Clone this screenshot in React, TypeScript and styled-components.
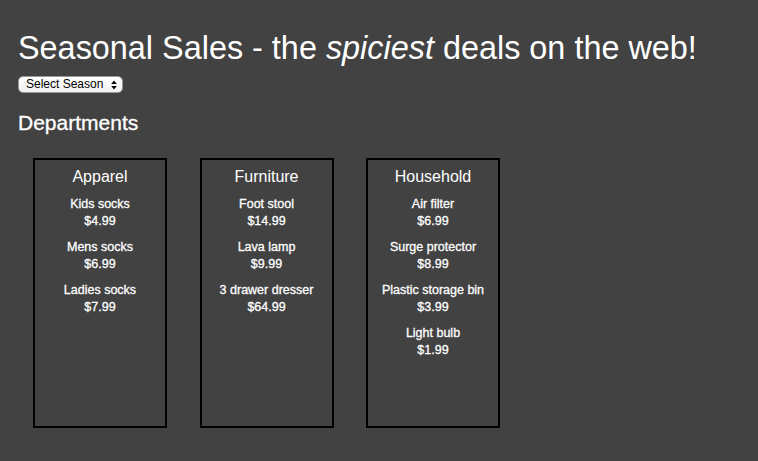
import React from "react";
import styled, { createGlobalStyle } from "styled-components";

const GlobalStyle = createGlobalStyle`
  html, body {
    margin: 0;
    padding: 0;
    background: #424242;
  }
  body {
    color: #ffffff;
    font-family: "Liberation Sans", Arial, Helvetica, sans-serif;
  }
`;

const Page = styled.div`
  display: flex;
  flex-direction: column;
  align-items: flex-start;
  padding: 30px 18px 0 18px;
  min-height: 461px;
  box-sizing: border-box;
`;

const Title = styled.h1`
  margin: 0;
  font-size: 32.4px;
  line-height: 37px;
  font-weight: normal;
  white-space: nowrap;
  em {
    font-style: italic;
  }
`;

const SelectWrap = styled.div`
  position: relative;
  margin-top: 9px;
  display: inline-flex;
`;

const Select = styled.select`
  appearance: none;
  -webkit-appearance: none;
  height: 17px;
  width: 105px;
  box-sizing: border-box;
  border: 1px solid #9a9a9a;
  border-radius: 5px;
  background: linear-gradient(#ffffff, #f1f1f1);
  color: #000;
  font-family: "Liberation Sans", Arial, sans-serif;
  font-size: 12px;
  line-height: 15px;
  padding: 0 0 0 7px;
  margin: 0;
  outline: none;
`;

const Arrows = styled.svg`
  position: absolute;
  right: 6px;
  top: 4px;
  pointer-events: none;
`;

const Heading = styled.h2`
  margin: 18px 0 0 0;
  font-size: 21px;
  line-height: 24px;
  font-weight: normal;
  -webkit-text-stroke: 0.3px #ffffff;
`;

const Departments = styled.div`
  display: flex;
  gap: 32.5px;
  margin-top: 23px;
  padding-left: 15px;
`;

const Card = styled.section`
  width: 134px;
  height: 270px;
  box-sizing: border-box;
  border: 2px solid #000;
  display: flex;
  flex-direction: column;
  align-items: center;
  padding-top: 8px;
  gap: 9px;
  text-align: center;
`;

const CardTitle = styled.h3`
  margin: 0 0 1px 0;
  font-size: 16px;
  line-height: 18px;
  font-weight: normal;
`;

const Item = styled.div`
  display: flex;
  flex-direction: column;
  align-items: center;
  font-size: 12.5px;
  line-height: 17px;
  white-space: nowrap;
  -webkit-text-stroke: 0.3px #ffffff;
`;

type Product = { name: string; price: string };
type Department = { name: string; items: Product[] };

const data: Department[] = [
  {
    name: "Apparel",
    items: [
      { name: "Kids socks", price: "$4.99" },
      { name: "Mens socks", price: "$6.99" },
      { name: "Ladies socks", price: "$7.99" },
    ],
  },
  {
    name: "Furniture",
    items: [
      { name: "Foot stool", price: "$14.99" },
      { name: "Lava lamp", price: "$9.99" },
      { name: "3 drawer dresser", price: "$64.99" },
    ],
  },
  {
    name: "Household",
    items: [
      { name: "Air filter", price: "$6.99" },
      { name: "Surge protector", price: "$8.99" },
      { name: "Plastic storage bin", price: "$3.99" },
      { name: "Light bulb", price: "$1.99" },
    ],
  },
];

export default function App() {
  return (
    <>
      <GlobalStyle />
      <Page>
        <Title>
          Seasonal Sales - the <em>spiciest</em> deals on the web!
        </Title>
        <SelectWrap>
          <Select defaultValue="">
            <option value="">Select Season</option>
            <option value="spring">Spring</option>
            <option value="summer">Summer</option>
            <option value="fall">Fall</option>
            <option value="winter">Winter</option>
          </Select>
          <Arrows width="6" height="10" viewBox="0 0 6 10">
            <path d="M3 0.5 L5.8 4 L0.2 4 Z" fill="#000" />
            <path d="M3 9.5 L5.8 6 L0.2 6 Z" fill="#000" />
          </Arrows>
        </SelectWrap>
        <Heading>Departments</Heading>
        <Departments>
          {data.map((d) => (
            <Card key={d.name}>
              <CardTitle>{d.name}</CardTitle>
              {d.items.map((it) => (
                <Item key={it.name}>
                  <span>{it.name}</span>
                  <span>{it.price}</span>
                </Item>
              ))}
            </Card>
          ))}
        </Departments>
      </Page>
    </>
  );
}
